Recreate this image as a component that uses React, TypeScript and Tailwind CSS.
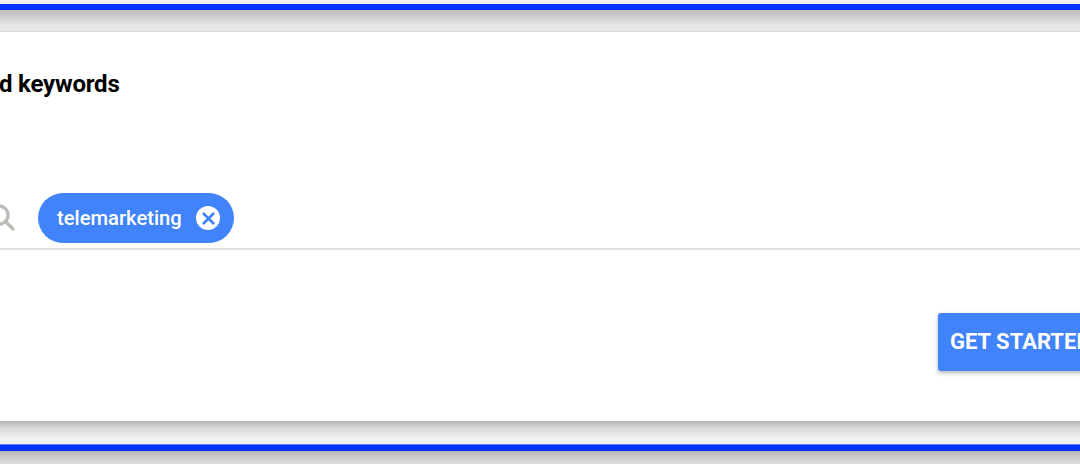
import { X } from 'lucide-react'

function ShadowStrip({ className }: { className: string }) {
  return <div className={`shrink-0 ${className}`} />
}

export default function App() {
  return (
    <div className="flex h-[464px] w-[1080px] flex-col overflow-hidden bg-[#f0f0f0] font-['Roboto',sans-serif]">
      <div className="h-[4px] shrink-0 bg-[#f1f1f4]" />
      <div className="h-[6px] shrink-0 bg-[#0433ff]" />
      <ShadowStrip className="h-[22px] border-b border-[#dcdcdc] bg-[linear-gradient(#c0c0c0,#c6c6c6_20%,#e6e6e6_70%,#e8e8e8)]" />

      <div className="flex h-[389px] shrink-0 flex-col bg-white">
        <h2 className="-ml-[1px] mt-[38px] h-[28px] text-[24px] font-bold leading-[28px] tracking-[-0.2px] text-black">
          d keywords
        </h2>
        <div className="mt-[95px] flex h-[57px] items-start border-b-2 border-[#e0e0e0]">
          <svg
            viewBox="0 0 30 30"
            fill="none"
            stroke="#bcbcb6"
            strokeWidth="3.4"
            strokeLinecap="round"
            className="-ml-[14px] mt-[9px] size-[30px] shrink-0"
          >
            <circle cx="13" cy="13" r="9" />
            <path d="M20 20l7 7" />
          </svg>
          <div className="ml-[22px] flex h-[50px] w-[196px] shrink-0 items-center rounded-full bg-[#4083fb] pl-[19px] pr-[14px]">
            <span className="flex-1 text-[20.2px] font-medium leading-none text-white">telemarketing</span>
            <span className="flex size-[24px] items-center justify-center rounded-full bg-white text-[#4083fb]">
              <X className="size-[19px]" strokeWidth={3.4} />
            </span>
          </div>
        </div>
        <div className="mt-[63px] flex justify-start pl-[938px]">
          <button
            type="button"
            className="h-[58px] w-[170px] shrink-0 whitespace-nowrap rounded-[3px] bg-[#4083fb] pb-[2px] pl-[12px] text-left text-[22px] font-bold text-white shadow-[0_2px_4px_rgba(0,0,0,0.3)]"
          >
            GET STARTED
          </button>
        </div>
      </div>

      <ShadowStrip className="h-[23px] bg-[linear-gradient(#b4b4b4,#d8d8d8_30%,#efefef_70%,#f2f2f2)]" />
      <div className="h-[7px] shrink-0 border-t border-[#5f7fff] bg-[#0433ff]" />
      <ShadowStrip className="h-[13px] bg-[linear-gradient(#b8b8b8,#d0d0d0_60%,#dcdcdc)]" />
    </div>
  )
}
